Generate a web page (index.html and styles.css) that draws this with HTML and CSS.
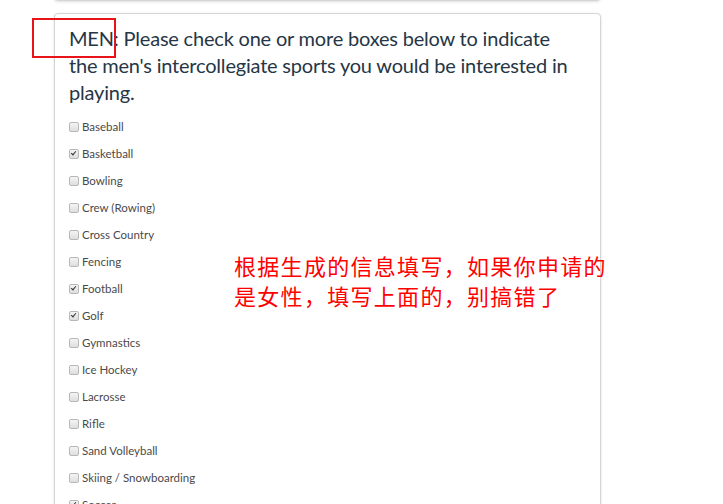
FILE: index.html
```html
<!DOCTYPE html>
<html>
<head>
<meta charset="utf-8">
<link rel="stylesheet" href="styles.css">
</head>
<body>
<div class="page">
  <div class="card card-prev"></div>
  <div class="card card-main">
    <h2 class="question"><span class="men">MEN:</span> Please check one or more boxes below to indicate the men's intercollegiate sports you would be interested in playing.</h2>
    <ul class="opts">
      <li><span class="box"></span><span class="lbl">Baseball</span></li>
      <li><span class="box on"></span><span class="lbl">Basketball</span></li>
      <li><span class="box"></span><span class="lbl">Bowling</span></li>
      <li><span class="box"></span><span class="lbl">Crew (Rowing)</span></li>
      <li><span class="box"></span><span class="lbl">Cross Country</span></li>
      <li><span class="box"></span><span class="lbl">Fencing</span></li>
      <li><span class="box on"></span><span class="lbl">Football</span></li>
      <li><span class="box on"></span><span class="lbl">Golf</span></li>
      <li><span class="box"></span><span class="lbl">Gymnastics</span></li>
      <li><span class="box"></span><span class="lbl">Ice Hockey</span></li>
      <li><span class="box"></span><span class="lbl">Lacrosse</span></li>
      <li><span class="box"></span><span class="lbl">Rifle</span></li>
      <li><span class="box"></span><span class="lbl">Sand Volleyball</span></li>
      <li><span class="box"></span><span class="lbl">Skiing / Snowboarding</span></li>
      <li><span class="box on"></span><span class="lbl">Soccer</span></li>
    </ul>
  </div>
  <div class="mark"></div>
  <div class="note">根据生成的信息填写，如果你申请的<br>是女性，填写上面的，别搞错了</div>
</div>
</body>
</html>
```

FILE: styles.css
```css
html, body {
  margin: 0;
  padding: 0;
  background: #fff;
  overflow: hidden;
}
.page {
  position: relative;
  display: flow-root;
  width: 723px;
  height: 504px;
  padding-left: 54px;
  box-sizing: border-box;
  overflow: hidden;
}
.card {
  width: 547px;
  box-sizing: border-box;
  background: #fff;
  border: 1px solid #d4d4d4;
  border-radius: 4px;
  box-shadow: 0 1px 3px rgba(0,0,0,0.12);
}
.card-prev {
  height: 14px;
  margin-top: -13px;
}
.card-main {
  margin-top: 12px;
  padding: 11px 14px 0 14px;
  height: 600px;
}
.question {
  margin: 0;
  font-family: "Lato", "Open Sans", sans-serif;
  font-weight: normal;
  font-size: 20px;
  letter-spacing: -0.2px;
  line-height: 27px;
  color: #263646;
  width: 500px;
}
.opts {
  list-style: none;
  margin: 7px 0 0 0;
  padding: 0;
}
.opts li {
  display: flex;
  align-items: center;
  height: 27px;
}
.box {
  width: 8px;
  height: 8px;
  border: 1px solid #b8b8b8;
  border-radius: 2px;
  background: linear-gradient(#f4f4f4, #dedede);
  margin-right: 3px;
  position: relative;
  flex: none;
}
.box.on::after {
  content: "";
  position: absolute;
  left: 2px;
  top: 0px;
  width: 2px;
  height: 4px;
  border-right: 1.5px solid #333;
  border-bottom: 1.5px solid #333;
  transform: rotate(40deg);
}
.lbl {
  font-family: "Lato", "Open Sans", sans-serif;
  font-size: 11.5px;
  color: #4a4a4a;
}
.mark {
  position: absolute;
  left: 32px;
  top: 18px;
  width: 80px;
  height: 36px;
  border: 2px solid #e8141a;
}
.note {
  position: absolute;
  left: 234px;
  top: 250px;
  font-family: "Noto Sans CJK SC", sans-serif;
  font-size: 22px;
  line-height: 30px;
  letter-spacing: 1.3px;
  color: #ff0000;
}
```
